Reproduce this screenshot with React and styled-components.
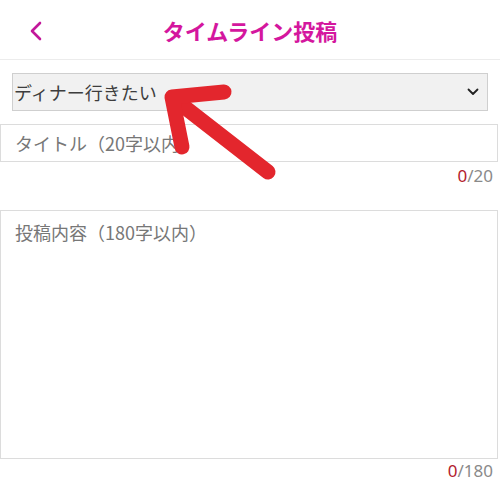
import styled, { createGlobalStyle } from "styled-components";

const GlobalStyle = createGlobalStyle`
  body {
    margin: 0;
    background: #fff;
    font-family: "Noto Sans CJK JP", "Noto Sans", sans-serif;
  }
`;

const Page = styled.div`
  position: relative;
  width: 500px;
  height: 498px;
  overflow: hidden;
  background: #fff;
`;

const Header = styled.div`
  height: 59px;
  border-bottom: 1px solid #ececec;
  display: grid;
  grid-template-columns: 60px 1fr 60px;
  align-items: center;
`;

const Back = styled.div`
  display: flex;
  padding-left: 29px;
  padding-top: 2px;
`;

const Title = styled.div`
  text-align: center;
  font-size: 22px;
  font-weight: 700;
  color: #d4179e;
`;

const Form = styled.div`
  display: flex;
  flex-direction: column;
`;

const Select = styled.div`
  margin: 13px 12px 0 12px;
  height: 36px;
  background: #f1f1f1;
  border: 1px solid #cfcfcf;
  display: flex;
  align-items: center;
  justify-content: space-between;
  padding: 0 8px 0 1px;
  font-size: 18px;
  color: #3d3d3d;
`;

const Field = styled.div`
  margin-top: ${(p) => p.$top}px;
  height: ${(p) => p.$height}px;
  margin-right: 2px;
  border: 1px solid #dcdcdc;
  padding: ${(p) => p.$pad}px 14px 0 14px;
  font-size: 18px;
  color: #777;
  box-sizing: border-box;
`;

const Counter = styled.div`
  text-align: right;
  padding-right: 7px;
  margin-top: ${(p) => p.$top}px;
  font-size: 17px;
  color: #8a8a8a;
  font-family: "Noto Sans", sans-serif;
  line-height: 24px;
`;

const Count = styled.span`
  color: #b3202d;
`;

const Arrow = styled.svg`
  position: absolute;
  left: 0;
  top: 0;
  pointer-events: none;
`;

export default function App() {
  return (
    <Page>
      <GlobalStyle />
      <Header>
        <Back>
          <svg width="14" height="20" viewBox="0 0 14 20">
            <path d="M11 2 L3 10 L11 18" fill="none" stroke="#c2179a" strokeWidth="2.6" strokeLinecap="round" strokeLinejoin="round" />
          </svg>
        </Back>
        <Title>タイムライン投稿</Title>
        <div />
      </Header>
      <Form>
        <Select>
          <span>ディナー行きたい</span>
          <svg width="12" height="8" viewBox="0 0 12 8">
            <path d="M1.5 1.5 L6 6 L10.5 1.5" fill="none" stroke="#222" strokeWidth="1.8" strokeLinecap="round" strokeLinejoin="round" />
          </svg>
        </Select>
        <Field $top={13} $height={38} $pad={5}>タイトル（20字以内）</Field>
        <Counter $top={2}>
          <Count>0</Count>/20
        </Counter>
        <Field $top={22} $height={249} $pad={8}>投稿内容（180字以内）</Field>
        <Counter $top={0}>
          <Count>0</Count>/180
        </Counter>
      </Form>
      <Arrow width="500" height="498" viewBox="0 0 500 498">
        <g fill="none" stroke="#e3262d" strokeWidth="15" strokeLinecap="round" strokeLinejoin="round">
          <path d="M178 102 L268 172" />
          <path d="M224 92 L172 97 L182 147" />
        </g>
      </Arrow>
    </Page>
  );
}
